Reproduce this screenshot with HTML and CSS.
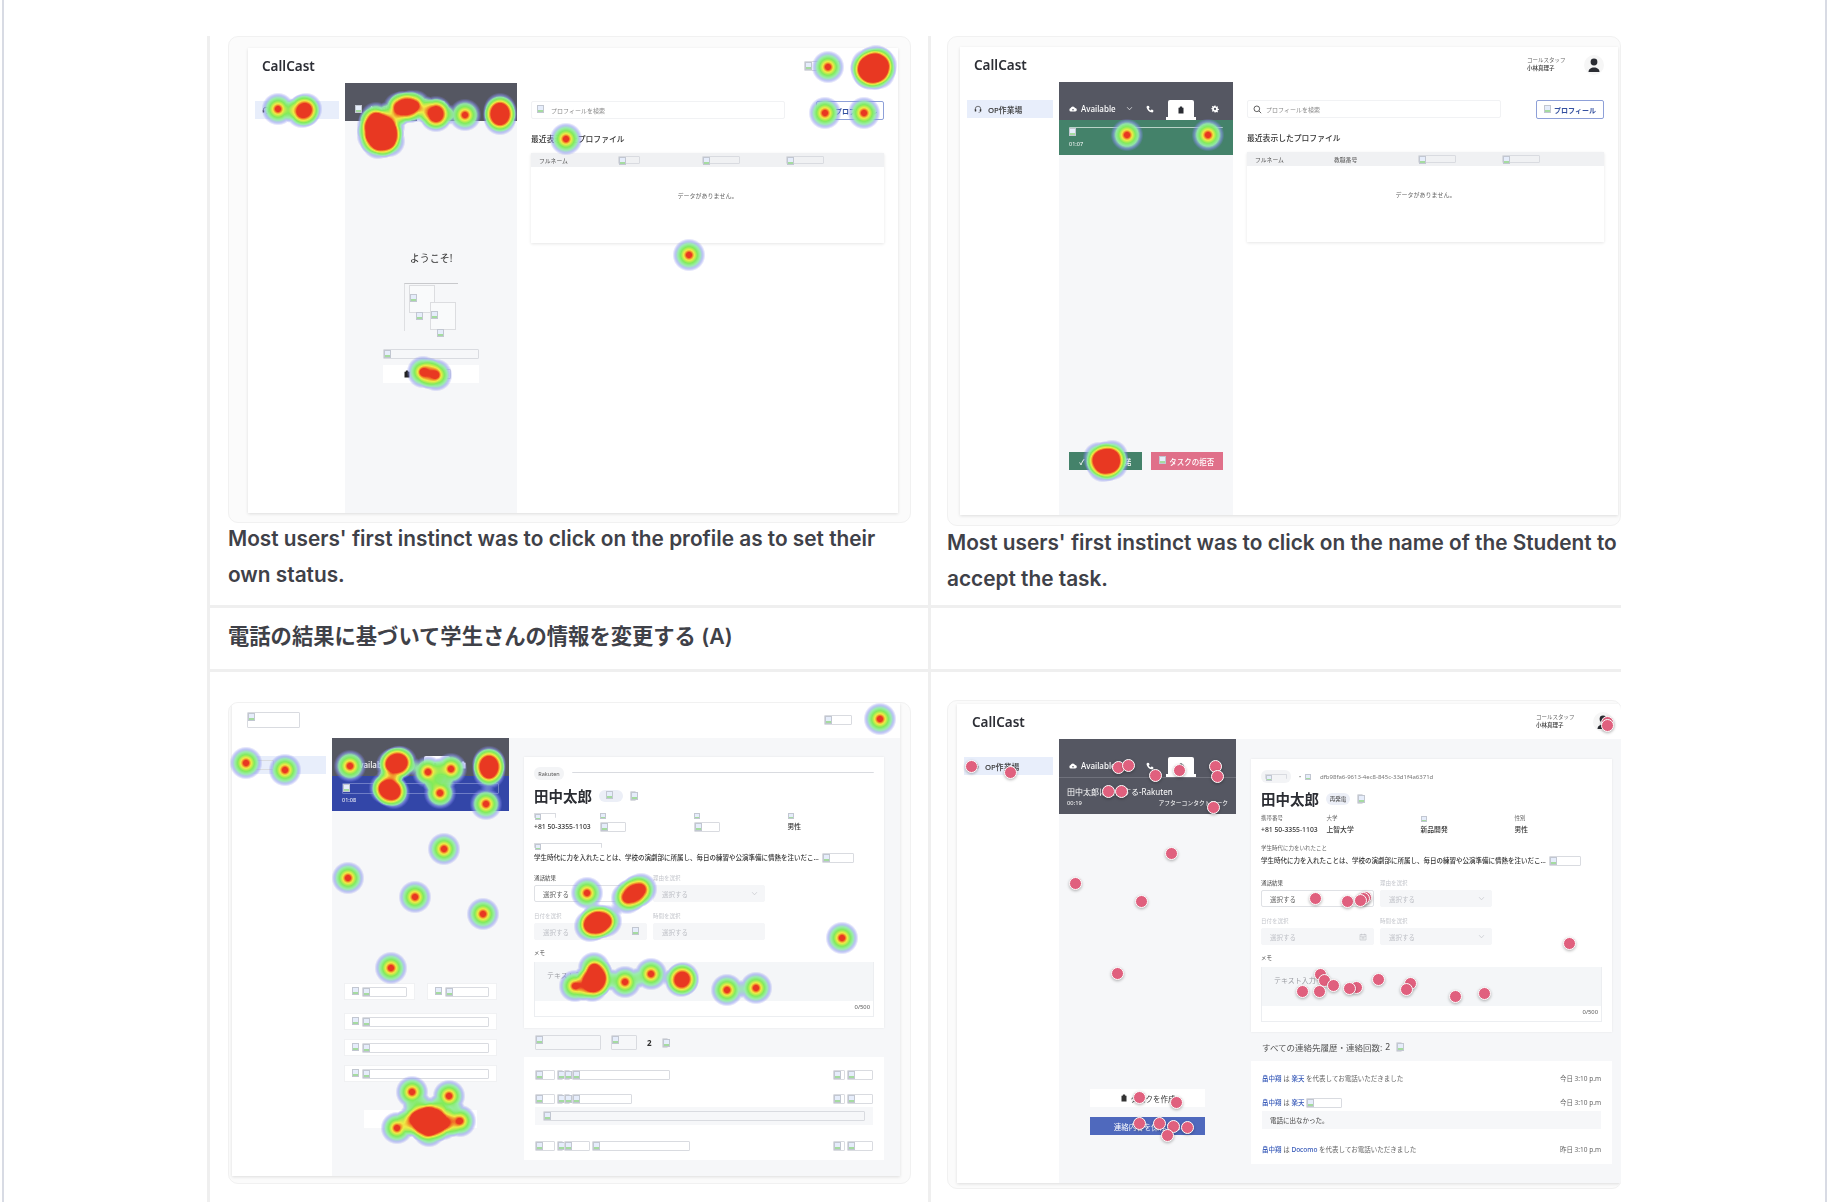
FILE: index.html
```html
<!DOCTYPE html>
<html lang="en">
<head>
    <meta charset="UTF-8">
    <meta name="viewport" content="width=device-width, initial-scale=1.0">
    <title>Usability test heatmaps</title>
    <link rel="stylesheet" href="styles.css">
</head>
<body>
    <svg class="icon-defs" aria-hidden="true">
        <symbol id="i-headset" viewBox="0 0 16 16"><path d="M2.5 10V8a5.5 5.5 0 0 1 11 0v2" fill="none" stroke="currentColor" stroke-width="1.3"/><rect x="1.5" y="8.5" width="3" height="4.5" rx="1" fill="currentColor"/><rect x="11.5" y="8.5" width="3" height="4.5" rx="1" fill="currentColor"/><path d="M13 13c0 1.2-2 1.8-4 1.8" fill="none" stroke="currentColor"/></symbol>
        <symbol id="i-search" viewBox="0 0 16 16"><circle cx="6.8" cy="6.8" r="5" fill="none" stroke="currentColor" stroke-width="1.5"/><path d="M10.5 10.5l4 4" stroke="currentColor" stroke-width="1.5"/></symbol>
        <symbol id="i-cloud" viewBox="0 0 16 16"><path d="M4 13a3.5 3.5 0 0 1-.6-6.9A4.5 4.5 0 0 1 12 6a3.5 3.5 0 0 1 .3 7z" fill="currentColor"/><circle cx="8" cy="9.5" r="1.6" fill="#555762"/></symbol>
        <symbol id="i-phone" viewBox="0 0 16 16"><path d="M3 1.5l3 .5 1 3.5-1.7 1.3c.8 2 2.2 3.400 4.200 4.200L10.800 8.800l3.500 1 .5 3-1.800 2C7 14.800 1.200 9 1 3.300z" fill="currentColor"/></symbol>
        <symbol id="i-clip" viewBox="0 0 16 16"><path d="M3 3.500h2.500V2a1 1 0 0 1 1-1h3a1 1 0 0 1 1 1v1.500H13V15H3z" fill="currentColor"/></symbol>
        <symbol id="i-gear" viewBox="0 0 16 16"><path d="M7 1h2l.4 2 1.700.7 1.700-1.100 1.400 1.400-1.100 1.700.7 1.700 2 .4v2l-2 .4-.7 1.700 1.100 1.700-1.400 1.400-1.700-1.100-1.700.7L9 15H7l-.4-2-1.700-.7-1.700 1.100-1.400-1.400 1.100-1.700-.7-1.700-2-.4V7l2-.4.7-1.700-1.100-1.700L3.200 1.800l1.700 1.100 1.700-.7z" fill="currentColor"/><circle cx="8" cy="8" r="2.300" fill="#555762"/></symbol>
        <symbol id="i-chevron" viewBox="0 0 16 16"><path d="M2.500 5l5.500 6 5.500-6" fill="none" stroke="currentColor" stroke-width="1.500"/></symbol>
        <symbol id="i-calendar" viewBox="0 0 16 16"><path d="M2 3h12v11H2z M2 6.500h12 M5 1.500v3 M11 1.500v3 M5 9h6 M5 11.500h6" fill="none" stroke="currentColor" stroke-width="1.300"/></symbol>
        <symbol id="i-user" viewBox="0 0 16 16"><circle cx="8" cy="5" r="3.400" fill="currentColor"/><path d="M2.500 15c0-3 2.500-4.500 5.500-4.500s5.500 1.500 5.500 4.500z" fill="currentColor"/></symbol>
    </svg>

    <div class="page">
        <div class="notes-table">

            <div class="notes-row row-shots">
                <div class="notes-cell cell-left">
                    <div class="shot shot-a" id="shot-a">
                        <div class="shot-inner">
                            <div class="shot-head">
                                <span class="logo">CallCast</span>
                                <div class="head-user head-user-blank">
                                    <span class="bi bi-w36"></span>
                                    <span class="avatar"><svg class="ico-fill"><use href="#i-user"/></svg></span>
                                </div>
                            </div>
                            <div class="shot-body">
                                <nav class="shot-nav"><div class="nav-item"><svg class="ico"><use href="#i-headset"/></svg><span>OP作業場</span></div></nav>
                                <aside class="panel">
                                    <div class="panel-top">
                                        <div class="tabs">
                                            <span class="bi bi-w10"></span>
                                            <span class="tabs-status">Available</span>
                                            <span class="tab"><svg class="ico"><use href="#i-clip"/></svg></span>
                                            <svg class="ico tabs-gear"><use href="#i-gear"/></svg>
                                        </div>
                                    </div>
                                    <div class="welcome">
                                        <div class="welcome-title">ようこそ!</div>
                                        <div class="illust">
                                            <div class="illust-sheet sheet-one"><span class="bi bi-w10"></span><span class="bi bi-w10 sheet-small"></span></div>
                                            <div class="illust-sheet sheet-two"><span class="bi bi-w10"></span><span class="bi bi-w10 sheet-small"></span></div>
                                        </div>
                                        <span class="bi welcome-bar"></span>
                                        <div class="welcome-btn"><svg class="ico"><use href="#i-clip"/></svg><span class="bi bi-w36"></span></div>
                                    </div>
                                </aside>
                                <main class="main-list">
                                    <div class="search-row">
                                        <div class="search-box"><span class="bi bi-w10"></span><span>プロフィールを検索</span></div>
                                        <div class="profile-btn"><span class="bi bi-w10"></span><span>プロフィール</span></div>
                                    </div>
                                    <div class="list-title">最近表示したプロファイル</div>
                                    <div class="list-table">
                                        <div class="list-head"><span>フルネーム</span><span><span class="bi bi-w22"></span></span><span><span class="bi bi-w38"></span></span><span><span class="bi bi-w38"></span></span></div>
                                        <div class="list-empty">データがありません。</div>
                                    </div>
                                </main>
                            </div>
                        </div>
                    </div>
                    <p class="caption caption-a">Most users' first instinct was to click on the profile as to set their own status.</p>
                </div>
                <div class="notes-cell cell-right">
                    <div class="shot shot-b" id="shot-b">
                        <div class="shot-inner">
                            <div class="shot-head">
                                <span class="logo">CallCast</span>
                                <div class="head-user">
                                    <div class="staff"><span>コールスタッフ</span><b>小林真理子</b></div>
                                    <span class="avatar"><svg class="ico-fill"><use href="#i-user"/></svg></span>
                                </div>
                            </div>
                            <div class="shot-body">
                                <nav class="shot-nav"><div class="nav-item"><svg class="ico"><use href="#i-headset"/></svg><span>OP作業場</span></div></nav>
                                <aside class="panel">
                                    <div class="panel-top">
                                        <div class="tabs">
                                            <svg class="ico"><use href="#i-cloud"/></svg>
                                            <span class="tabs-status">Available</span>
                                            <svg class="ico tabs-chevron"><use href="#i-chevron"/></svg>
                                            <svg class="ico"><use href="#i-phone"/></svg>
                                            <span class="tab"><svg class="ico"><use href="#i-clip"/></svg></span>
                                            <svg class="ico tabs-gear"><use href="#i-gear"/></svg>
                                        </div>
                                    </div>
                                    <div class="call-strip strip-green">
                                        <span class="bi bi-fill strip-bar"></span>
                                        <span class="strip-time">01:07</span>
                                    </div>
                                    <div class="task-actions">
                                        <div class="task-btn task-accept">✓ タスクを承諾</div>
                                        <div class="task-btn task-reject"><span class="bi bi-w8"></span>タスクの拒否</div>
                                    </div>
                                </aside>
                                <main class="main-list">
                                    <div class="search-row">
                                        <div class="search-box"><svg class="ico"><use href="#i-search"/></svg><span>プロフィールを検索</span></div>
                                        <div class="profile-btn"><span class="bi bi-w8"></span><span>プロフィール</span></div>
                                    </div>
                                    <div class="list-title">最近表示したプロファイル</div>
                                    <div class="list-table">
                                        <div class="list-head"><span>フルネーム</span><span>教職番号</span><span><span class="bi bi-w38"></span></span><span><span class="bi bi-w38"></span></span></div>
                                        <div class="list-empty">データがありません。</div>
                                    </div>
                                </main>
                            </div>
                        </div>
                    </div>
                    <p class="caption caption-b">Most users' first instinct was to click on the name of the Student to accept the task.</p>
                </div>
            </div>

            <div class="notes-row row-title">
                <div class="notes-cell cell-left"><h3 class="section-title">電話の結果に基づいて学生さんの情報を変更する (A)</h3></div>
                <div class="notes-cell cell-right"></div>
            </div>

            <div class="notes-row row-detail">
                <div class="notes-cell cell-left">
                    <div class="shot shot-c" id="shot-c">
                        <div class="shot-inner">
                            <div class="shot-head">
                                <span class="bi bi-w52"></span>
                                <div class="head-user head-user-blank">
                                    <span class="bi bi-w28"></span>
                                    <span class="bi bi-w10"></span>
                                </div>
                            </div>
                            <div class="shot-body">
                                <nav class="shot-nav"><div class="nav-item"><span class="bi bi-w28"></span></div></nav>
                                <aside class="panel">
                                    <div class="panel-top">
                                        <div class="tabs">
                                            <svg class="ico"><use href="#i-cloud"/></svg>
                                            <span class="tabs-status">Available</span>
                                            <svg class="ico tabs-chevron"><use href="#i-chevron"/></svg>
                                            <span class="tab"><svg class="ico"><use href="#i-phone"/></svg></span>
                                            <svg class="ico"><use href="#i-clip"/></svg>
                                            <svg class="ico tabs-gear"><use href="#i-gear"/></svg>
                                        </div>
                                    </div>
                                    <div class="call-strip strip-blue">
                                        <span class="bi bi-fill strip-bar"></span>
                                        <span class="strip-time">01:08</span>
                                    </div>
                                    <div class="script-list">
                                        <div class="script-pair">
                                            <div class="script-item"><span class="bi bi-w8"></span><span class="bi bi-fill"></span></div>
                                            <div class="script-item"><span class="bi bi-w8"></span><span class="bi bi-fill"></span></div>
                                        </div>
                                        <div class="script-item"><span class="bi bi-w8"></span><span class="bi bi-fill"></span></div>
                                        <div class="script-item"><span class="bi bi-w8"></span><span class="bi bi-fill"></span></div>
                                        <div class="script-item"><span class="bi bi-w8"></span><span class="bi bi-fill"></span></div>
                                        <div class="script-action"></div>
                                    </div>
                                </aside>
                                <main class="main-detail">
                                    <section class="detail-card">
                                        <div class="crumb-row"><span class="crumb-chip">Rakuten</span><span class="bi bi-fill crumb-line"></span></div>
                                        <div class="name-row"><span class="name">田中太郎</span><span class="name-chip"><span class="bi bi-w10"></span></span><span class="bi bi-w6"></span></div>
                                        <div class="field-grid">
                                            <div class="field-label"><span class="bi bi-w22 bi-low"></span></div><div class="field-label"><span class="bi bi-w10 bi-low"></span></div><div class="field-label"><span class="bi bi-w10 bi-low"></span></div><div class="field-label"><span class="bi bi-w10 bi-low"></span></div>
                                            <div class="field-value">+81 50-3355-1103</div><div class="field-value"><span class="bi bi-w26"></span></div><div class="field-value"><span class="bi bi-w26"></span></div><div class="field-value">男性</div>
                                        </div>
                                        <div class="field-label label-gap"><span class="bi bi-w68 bi-low"></span></div>
                                        <div class="field-long">学生時代に力を入れたことは、学校の演劇部に所属し、毎日の練習や公演準備に情熱を注いだこ...<span class="bi bi-w32"></span></div>
                                        <div class="form-grid">
                                            <div><label class="form-label">通話結果</label><div class="select">選択する<svg class="ico tabs-chevron"><use href="#i-chevron"/></svg></div></div>
                                            <div><label class="form-label is-off">理由を選択</label><div class="select is-off">選択する<svg class="ico tabs-chevron"><use href="#i-chevron"/></svg></div></div>
                                            <div><label class="form-label is-off">日付を選択</label><div class="select is-off">選択する<span class="bi bi-w8"></span></div></div>
                                            <div><label class="form-label is-off">時間を選択</label><div class="select is-off">選択する</div></div>
                                        </div>
                                        <label class="form-label memo-label">メモ</label>
                                        <div class="memo"><div class="memo-fill">テキスト入力</div><div class="memo-count">0/500</div></div>
                                    </section>
                                    <div class="history-title"><span class="bi bi-w66"></span><span class="bi bi-w36"></span><b>2</b><span class="bi bi-w6"></span></div>
                                    <section class="history-card">
                                        <div class="history-row"><div><span class="bi bi-w20"></span> <span class="bi bi-w6"></span> <span class="bi bi-w6"></span> <span class="bi bi-w98"></span></div><div><span class="bi bi-w12"></span> <span class="bi bi-w26"></span></div></div>
                                        <div class="history-row"><div><span class="bi bi-w20"></span> <span class="bi bi-w6"></span> <span class="bi bi-w6"></span> <span class="bi bi-w60"></span></div><div><span class="bi bi-w12"></span> <span class="bi bi-w26"></span></div></div>
                                        <div class="history-note"><span class="bi bi-fill"></span></div>
                                        <div class="history-row row-last"><div><span class="bi bi-w20"></span> <span class="bi bi-w6"></span> <span class="bi bi-w26"></span> <span class="bi bi-w98"></span></div><div><span class="bi bi-w12"></span> <span class="bi bi-w26"></span></div></div>
                                    </section>
                                </main>
                            </div>
                        </div>
                    </div>
                </div>
                <div class="notes-cell cell-right">
                    <div class="shot shot-d" id="shot-d">
                        <div class="shot-inner">
                            <div class="shot-head">
                                <span class="logo">CallCast</span>
                                <div class="head-user">
                                    <div class="staff"><span>コールスタッフ</span><b>小林真理子</b></div>
                                    <span class="avatar"><svg class="ico-fill"><use href="#i-user"/></svg></span>
                                </div>
                            </div>
                            <div class="shot-body">
                                <nav class="shot-nav"><div class="nav-item"><svg class="ico"><use href="#i-headset"/></svg><span>OP作業場</span></div></nav>
                                <aside class="panel">
                                    <div class="panel-top panel-top-tall">
                                        <div class="tabs">
                                            <svg class="ico"><use href="#i-cloud"/></svg>
                                            <span class="tabs-status">Available</span>
                                            <svg class="ico tabs-chevron"><use href="#i-chevron"/></svg>
                                            <svg class="ico"><use href="#i-phone"/></svg>
                                            <span class="tab"><svg class="ico"><use href="#i-clip"/></svg></span>
                                            <svg class="ico tabs-gear"><use href="#i-gear"/></svg>
                                        </div>
                                        <div class="call-info">
                                            <div class="call-name">田中太郎に発信する-Rakuten</div>
                                            <div class="call-meta"><span>00:19</span><span>アフターコンタクトワーク</span></div>
                                        </div>
                                    </div>
                                    <div class="task-stack">
                                        <div class="stack-btn"><svg class="ico"><use href="#i-clip"/></svg>タスクを作成</div>
                                        <div class="stack-btn stack-primary">連絡内容を保存する</div>
                                    </div>
                                </aside>
                                <main class="main-detail">
                                    <section class="detail-card">
                                        <div class="crumb-row"><span class="crumb-chip"><span class="bi bi-w22 bi-low"></span></span><span class="crumb-sep">•</span><span class="bi bi-w10 bi-low"></span><span class="crumb-id">dfb98fa6-9613-4ec8-845c-33d1f4a6371d</span></div>
                                        <div class="name-row"><span class="name">田中太郎</span><span class="name-chip">再発電</span><span class="bi bi-w6"></span></div>
                                        <div class="field-grid">
                                            <div class="field-label">携帯番号</div><div class="field-label">大学</div><div class="field-label"><span class="bi bi-w10 bi-low"></span></div><div class="field-label">性別</div>
                                            <div class="field-value">+81 50-3355-1103</div><div class="field-value">上智大学</div><div class="field-value">新品開発</div><div class="field-value">男性</div>
                                        </div>
                                        <div class="field-label label-gap">学生時代に力をいれたこと</div>
                                        <div class="field-long">学生時代に力を入れたことは、学校の演劇部に所属し、毎日の練習や公演準備に情熱を注いだこ...<span class="bi bi-w32"></span></div>
                                        <div class="form-grid">
                                            <div><label class="form-label">通話結果</label><div class="select">選択する<svg class="ico tabs-chevron"><use href="#i-chevron"/></svg></div></div>
                                            <div><label class="form-label is-off">理由を選択</label><div class="select is-off">選択する<svg class="ico tabs-chevron"><use href="#i-chevron"/></svg></div></div>
                                            <div><label class="form-label is-off">日付を選択</label><div class="select is-off">選択する<svg class="ico"><use href="#i-calendar"/></svg></div></div>
                                            <div><label class="form-label is-off">時間を選択</label><div class="select is-off">選択する<svg class="ico tabs-chevron"><use href="#i-chevron"/></svg></div></div>
                                        </div>
                                        <label class="form-label memo-label">メモ</label>
                                        <div class="memo"><div class="memo-fill">テキスト入力</div><div class="memo-count">0/500</div></div>
                                    </section>
                                    <div class="history-title history-text">すべての連絡先履歴・連絡回数: <b>2</b><span class="bi bi-w6"></span></div>
                                    <section class="history-card">
                                        <div class="history-row"><div><a>畠中翔</a> は <a>楽天</a> を代表してお電話いただきました</div><div>今日 3:10 p.m</div></div>
                                        <div class="history-row"><div><a>畠中翔</a> は <a>楽天</a> <span class="bi bi-w36"></span></div><div>今日 3:10 p.m</div></div>
                                        <div class="history-note">電話に出なかった。</div>
                                        <div class="history-row row-last"><div><a>畠中翔</a> は <a>Docomo</a> を代表してお電話いただきました</div><div>昨日 3:10 p.m</div></div>
                                    </section>
                                </main>
                            </div>
                        </div>
                    </div>
                </div>
            </div>

        </div>
    </div>

    <script src="script.js"></script>
</body>
</html>
```

FILE: styles.css
```css
* {
    box-sizing: border-box;
}
html, body {
    margin: 0;
    height: 1202px;
    overflow: hidden;
    background: #ffffff;
    color: #3d3f46;
    font-family: "Noto Sans", "Noto Sans CJK JP", sans-serif;
}
.icon-defs {
    display: none;
}
.page {
    height: 1202px;
    width: 1825px;
    margin-left: 2px;
    padding: 36px 0 0 203px;
    border-left: 2px solid #d8dbe4;
    border-right: 2px solid #d8dbe4;
}
.notes-table {
    width: 1414px;
}
.notes-row {
    display: grid;
    grid-template-columns: 721px 1fr;
    border-left: 3px solid #efefef;
    border-bottom: 3px solid #efefef;
}
.row-shots {
    height: 572px;
}
.row-title {
    height: 64px;
}
.row-detail {
    height: 560px;
    border-bottom: none;
}
.notes-cell {
    overflow: hidden;
    min-width: 0;
}
.cell-left {
    border-right: 3px solid #efefef;
    padding-left: 18px;
}
.cell-right {
    padding-left: 16px;
}
.caption {
    margin: 0;
    font-family: Inter, "Noto Sans CJK JP", sans-serif;
    font-size: 20.8px;
    font-weight: 600;
    line-height: 36px;
    color: #3f4148;
}
.caption-a {
    margin-top: -2px;
    width: 680px;
}
.caption-b {
    margin-top: -1px;
    width: 672px;
}
.section-title {
    margin: 10px 0 0;
    font-family: Inter, "Noto Sans CJK JP", sans-serif;
    font-size: 21.3px;
    font-weight: 600;
    line-height: 36px;
    color: #3f4148;
}
.row-detail .shot-c {
    margin-top: 30px;
}
.row-detail .shot-d {
    margin-top: 28px;
}

/* screenshot frame */
.shot {
    position: relative;
    overflow: hidden;
    background: #fbfbfb;
    border: 1px solid #f1f1f1;
    border-radius: 10px;
}
.shot-inner {
    display: flex;
    flex-direction: column;
    height: 100%;
    background: #ffffff;
    box-shadow: 0 1px 3px rgba(0,0,0,0.12);
    filter: blur(0.4px);
}
.shot-a {
    width: 683px;
    height: 487px;
    padding: 11px 12px 9px 19px;
}
.shot-b {
    width: 674px;
    height: 490px;
    padding: 10px 2px 10px 12px;
}
.shot-c {
    width: 683px;
    height: 482px;
    padding: 0 10px 7px 3px;
}
.shot-d {
    width: 675px;
    height: 489px;
    padding: 3px 0 5px 9px;
}
.shot-head {
    flex: 0 0 35px;
    display: flex;
    align-items: center;
    justify-content: space-between;
    padding: 0 14px 0 14px;
}
.shot-c .shot-head {
    padding: 0 14px 2px 15px;
}
.shot-d .shot-head {
    padding: 0 8px 0 15px;
}
.logo {
    font-size: 13.5px;
    font-weight: 600;
    color: #2d2f36;
}
.head-user {
    display: flex;
    align-items: center;
    gap: 18px;
}
.head-user-blank {
    gap: 24px;
}
.staff {
    display: flex;
    flex-direction: column;
    font-size: 5.500px;
    line-height: 7.500px;
    width: 39px;
    color: #666;
    white-space: nowrap;
}
.staff b {
    color: #333;
    font-weight: 500;
}
.avatar {
    width: 20px;
    height: 20px;
    border-radius: 50%;
    background: #f6f6f6;
    color: #2b2d33;
    display: flex;
}
.ico-fill {
    width: 20px;
    height: 20px;
    padding: 2px;
}
.shot-body {
    flex: 1;
    display: grid;
    min-height: 0;
}
.shot-a .shot-body {
    grid-template-columns: 97px 172px 1fr;
}
.shot-b .shot-body {
    grid-template-columns: 99px 174px 1fr;
}
.shot-c .shot-body {
    grid-template-columns: 100px 177px 1fr;
}
.shot-d .shot-body {
    grid-template-columns: 102px 177px 1fr;
}
.ico {
    width: 8px;
    height: 8px;
    flex: none;
}

/* broken image placeholder */
.bi {
    display: inline-block;
    position: relative;
    height: 10px;
    vertical-align: middle;
    border: 1px solid #d9dbe0;
    border-radius: 1px;
}
.bi::before {
    content: "";
    position: absolute;
    left: 0;
    top: 0;
    width: 5px;
    height: 6px;
    background: linear-gradient(#e6edfb 0 65%, #a5dba0 65%);
    border: 1px solid #c2c7d1;
}
.bi-low {
    height: 5px;
    border-bottom: none;
}
.bi-low::before {
    width: 4px;
    height: 4px;
}
.bi-w6 { width: 6px; }
.bi-w8 { width: 8px; border: none; }
.bi-w10 { width: 10px; border: none; }
.bi-w12 { width: 12px; }
.bi-w20 { width: 20px; }
.bi-w22 { width: 22px; }
.bi-w26 { width: 26px; }
.bi-w28 { width: 28px; }
.bi-w32 { width: 32px; margin-left: 3px; }
.bi-w36 { width: 36px; }
.bi-w38 { width: 38px; }
.bi-w52 { width: 53px; height: 16px; }
.bi-w60 { width: 60px; }
.bi-w66 { width: 66px; height: 15px; }
.bi-w68 { width: 68px; }
.bi-w98 { width: 98px; }
.bi-fill { display: block; flex: 1; min-width: 0; }

/* left nav */
.shot-nav {
    padding: 18px 6px 0 7px;
}
.nav-item {
    display: flex;
    align-items: center;
    gap: 6px;
    height: 18px;
    padding-left: 7px;
    font-size: 7.800px;
    font-weight: 500;
    background: #e8eefb;
    color: #333;
}

/* middle panel */
.panel {
    display: flex;
    flex-direction: column;
    background: #f6f7f9;
    min-height: 0;
}
.panel-top {
    height: 38px;
    background: #555762;
    padding-top: 18px;
    color: #ffffff;
    flex: none;
}
.panel-top-tall {
    height: 75px;
}
.tabs {
    display: flex;
    align-items: center;
    height: 20px;
    padding: 0 8px 0 10px;
    gap: 9px;
    font-size: 8px;
    font-weight: 500;
}
.tabs > :not(.tab) {
    margin-bottom: 3px;
}
.tabs-status {
    margin-left: -5px;
    width: 36px;
    white-space: nowrap;
}
.tabs-chevron {
    width: 7px;
    height: 7px;
}
.tabs .tabs-chevron {
    margin-right: 4px;
}
.tabs-gear {
    margin-left: auto;
    margin-right: 6px;
}
.tab {
    position: relative;
    width: 26px;
    height: 20px;
    margin-left: 5px;
    background: #ffffff;
    border-radius: 2px 2px 0 0;
    color: #2b2d33;
    display: flex;
    align-items: center;
    justify-content: center;
}
.tab::after {
    content: "";
    position: absolute;
    left: -2px;
    right: -2px;
    bottom: 0;
    height: 3px;
    background: #ffffff;
}
.call-strip {
    flex: none;
    height: 35px;
    padding: 7px 10px 0;
    color: #ffffff;
    font-size: 5.500px;
}
.strip-green {
    background: #44826a;
}
.strip-blue {
    background: #3346a8;
}
.strip-bar {
    height: 11px;
    border: none;
    border-top: 1px solid #b9d2c7;
}
.strip-blue .strip-bar {
    border: 1px solid #6e7dc6;
}
.strip-time {
    display: block;
    margin-top: 2px;
}
.welcome {
    display: flex;
    flex-direction: column;
    align-items: center;
    padding-top: 130px;
}
.welcome-title {
    font-size: 10px;
    line-height: 14px;
    color: #333;
}
.illust {
    position: relative;
    width: 54px;
    height: 48px;
    margin-top: 18px;
    border-top: 1px solid #c8c9cc;
    border-left: 1px solid #dedfe2;
}
.illust-sheet {
    position: absolute;
    width: 26px;
    height: 28px;
    background: #f9fafb;
    border: 1px solid #dcdde0;
}
.sheet-one {
    left: 4px;
    top: 1px;
}
.sheet-two {
    left: 25px;
    top: 18px;
}
.sheet-small {
    display: block;
    margin: 4px 0 0 6px;
    height: 5px;
}
.welcome-bar {
    width: 96px;
    height: 10px;
    margin-top: 18px;
}
.welcome-btn {
    display: flex;
    align-items: center;
    gap: 4px;
    width: 96px;
    height: 18px;
    margin-top: 6px;
    padding-left: 20px;
    background: #ffffff;
    color: #222;
}
.task-actions {
    margin-top: auto;
    padding: 0 10px 45px;
    display: grid;
    grid-template-columns: 1fr 1fr;
    gap: 9px;
}
.task-btn {
    height: 18px;
    display: flex;
    align-items: center;
    justify-content: center;
    gap: 2px;
    color: #ffffff;
    font-size: 7.500px;
    font-weight: 500;
    white-space: nowrap;
}
.task-accept {
    background: #44826a;
}
.task-reject {
    background: #e0708a;
}
.call-info {
    height: 36px;
    padding: 8px 8px 0;
    border-top: 1px solid #70727c;
}
.call-name {
    font-size: 8px;
    line-height: 11px;
}
.call-meta {
    display: flex;
    justify-content: space-between;
    margin-top: 2px;
    font-size: 5.800px;
    line-height: 9px;
}
.task-stack {
    margin-top: auto;
    padding: 0 31px 48px;
    display: flex;
    flex-direction: column;
    gap: 10px;
}
.stack-btn {
    height: 18px;
    display: flex;
    align-items: center;
    justify-content: center;
    gap: 3px;
    background: #ffffff;
    font-size: 7.500px;
    color: #333;
}
.stack-primary {
    background: #4f69bd;
    color: #ffffff;
}
.script-list {
    padding: 172px 12px 0;
    display: flex;
    flex-direction: column;
    gap: 9px;
}
.script-pair {
    display: grid;
    grid-template-columns: 1fr 1fr;
    gap: 12px;
    margin-bottom: 4px;
}
.script-item {
    display: flex;
    align-items: center;
    gap: 2px;
    height: 17px;
    padding: 0 7px;
    background: #ffffff;
    border: 1px solid #f0f1f3;
}
.script-action {
    margin: 19px 20px 0;
    height: 18px;
    background: #ffffff;
}

/* list screen */
.main-list {
    padding: 18px 14px 0;
}
.search-row {
    display: flex;
    justify-content: space-between;
}
.search-box {
    width: 254px;
    height: 18px;
    display: flex;
    align-items: center;
    gap: 4px;
    padding-left: 5px;
    font-size: 6px;
    color: #888;
    border: 1px solid #f1f2f4;
    border-radius: 2px;
}
.search-box .ico {
    color: #444;
    width: 9px;
    height: 9px;
}
.profile-btn {
    width: 68px;
    height: 19px;
    display: flex;
    align-items: center;
    justify-content: center;
    gap: 2px;
    font-size: 7px;
    font-weight: 700;
    color: #34509f;
    border: 1px solid #8ea0d8;
    border-radius: 2px;
}
.list-title {
    margin-top: 12px;
    font-size: 7.800px;
    line-height: 14px;
    font-weight: 500;
    color: #333;
}
.list-table {
    margin-top: 7px;
    height: 90px;
    box-shadow: 0 1px 3px rgba(0,0,0,0.1);
}
.list-head {
    display: grid;
    grid-template-columns: 79px 84px 84px 1fr;
    align-items: center;
    height: 14px;
    padding-left: 8px;
    background: #f0f1f3;
    font-size: 5.800px;
    color: #555;
}
.list-head .bi {
    height: 8px;
}
.list-empty {
    padding-top: 24px;
    text-align: center;
    font-size: 6px;
    line-height: 10px;
    color: #666;
}

/* detail screen */
.main-detail {
    padding: 19px 16px 0 15px;
    background: #f6f7f9;
    min-width: 0;
}
.shot-d .main-detail {
    padding: 20px 9px 0 15px;
}
.detail-card {
    padding: 11px 10px 11px;
    background: #ffffff;
    box-shadow: 0 0 2px rgba(0,0,0,0.08);
}
.shot-c .detail-card {
    padding-top: 10px;
}
.shot-d .detail-card {
    padding-bottom: 10px;
}
.crumb-row {
    display: flex;
    align-items: center;
    gap: 4px;
    height: 13px;
    font-size: 5.500px;
    color: #777;
}
.crumb-chip {
    display: inline-flex;
    align-items: center;
    justify-content: center;
    width: 30px;
    height: 13px;
    margin-right: 4px;
    border-radius: 6px;
    background: #f3f4f6;
    color: #555;
}
.crumb-line {
    height: 3px;
    border-left: none;
    border-right: none;
    border-bottom: none;
}
.crumb-line::before {
    display: none;
}
.crumb-id {
    margin-left: 1px;
    font-size: 6px;
}
.name-row {
    display: flex;
    align-items: center;
    gap: 7px;
    height: 16px;
    margin-top: 8px;
}
.name {
    font-size: 14.500px;
    font-weight: 700;
    color: #2b2d33;
    line-height: 16px;
}
.name-chip {
    display: inline-flex;
    align-items: center;
    justify-content: center;
    width: 24px;
    height: 12px;
    border-radius: 6px;
    background: #eceff7;
    font-size: 5.500px;
    color: #444;
}
.field-grid {
    display: grid;
    grid-template-columns: 65.500px 94px 94px 1fr;
    margin-top: 7px;
}
.field-label {
    font-size: 5.500px;
    line-height: 8px;
    color: #666;
}
.field-grid .field-value {
    margin-top: 3px;
}
.field-value {
    font-size: 6.800px;
    line-height: 10px;
    color: #333;
    font-weight: 500;
}
.field-value .bi {
    height: 10px;
}
.label-gap {
    margin-top: 9px;
}
.field-long {
    margin-top: 4px;
    font-size: 6.500px;
    line-height: 10px;
    color: #333;
    font-weight: 500;
    white-space: nowrap;
}
.form-grid {
    display: grid;
    grid-template-columns: 113px 112px;
    gap: 10px 6px;
    margin-top: 13px;
}
.shot-c .form-grid {
    margin-top: 11px;
}
.form-label {
    display: block;
    font-size: 5.500px;
    line-height: 8px;
    color: #444;
}
.form-label.is-off {
    color: #c4c6cc;
}
.select {
    display: flex;
    align-items: center;
    justify-content: space-between;
    height: 17px;
    margin-top: 3px;
    padding: 0 6px 0 8px;
    font-size: 6.500px;
    color: #666;
    background: #ffffff;
    border: 1px solid #dfe1e5;
    border-radius: 2px;
}
.select.is-off {
    background: #f5f6f8;
    border-color: #f5f6f8;
    color: #c0c2c8;
}
.memo-label {
    margin-top: 9px;
}
.memo {
    height: 55px;
    margin-top: 5px;
    border: 1px solid #eceef1;
    border-top: none;
}
.memo-fill {
    height: 39px;
    padding: 9px 12px;
    background: #f4f6f8;
    font-size: 7px;
    line-height: 10px;
    color: #9a9ca2;
}
.memo-count {
    padding: 2px 3px 0 0;
    text-align: right;
    font-size: 5.800px;
    color: #555;
}
.history-title {
    display: flex;
    align-items: center;
    gap: 10px;
    height: 29px;
    padding-left: 11px;
    font-size: 8px;
    color: #333;
}
.history-title .bi-w36 {
    width: 26px;
    height: 15px;
}
.history-text {
    gap: 0;
    color: #555;
    font-size: 8.500px;
}
.history-text b {
    margin: 0 6px 0 3px;
    font-weight: 500;
}
.history-card {
    padding: 12px 11px 10px;
    background: #ffffff;
}
.history-row {
    display: flex;
    justify-content: space-between;
    align-items: center;
    height: 10px;
    font-size: 6.500px;
    color: #666;
    white-space: nowrap;
}
.history-row + .history-row {
    margin-top: 14px;
}
.history-row a {
    color: #3558b8;
    font-weight: 500;
}
.history-note {
    display: flex;
    align-items: center;
    height: 18px;
    margin-top: 4px;
    padding: 0 8px;
    background: #f6f7f9;
    font-size: 6.500px;
    color: #444;
}
.row-last {
    margin-top: 15px;
}

/* overlay drawn by script.js */
.heat-layer {
    position: absolute;
    left: 0;
    top: 0;
    pointer-events: none;
}
.pin {
    position: absolute;
    width: 13px;
    height: 13px;
    border-radius: 50%;
    background: #e0607e;
    border: 1.500px solid #ffffff;
    box-shadow: 0 1px 3px rgba(0,0,0,0.3);
}
```

FILE: script.js
```js
// Click data in page coordinates
const heatPoints = {
    'shot-a': [
        [277,108],[301,111],[305,108],[375,117],[379,127],[382,137],[377,142],[384,132],[372,125],[388,125],[372,135],[388,140],
        [405,106],[414,105],[398,107],[435,111],[435,115],[464,114],[499,113],[499,108],[499,118],
        [827,66],[873,67],[875,60],[870,73],[866,64],[880,64],[866,70],[878,72],[824,112],[863,112],[565,138],[688,254],[422,371],[435,374]
    ],
    'shot-b': [
        [1126,134],[1207,134],[1098,457],[1111,455],[1102,465],[1111,463],[1105,460]
    ],
    'shot-c': [
        [245,762],[284,769],[349,765],[396,762],[391,764],[400,761],[389,788],[384,787],[393,792],
        [427,771],[450,768],[488,765],[488,772],[488,761],[439,792],[485,803],[443,848],[347,877],
        [414,896],[482,913],[390,967],[586,892],[633,892],[626,897],[640,888],
        [596,922],[589,925],[605,920],[596,920],[841,937],[574,985],[593,967],[593,980],[591,985],[598,977],
        [624,981],[650,973],[680,980],[682,977],[726,989],[755,987],[879,718],
        [411,1091],[448,1095],[396,1127],[459,1120],[428,1120],[414,1117],[442,1123],[428,1130],[428,1112],[420,1122],[436,1118]
    ]
};
const pinPoints = [
    [970,765],[1009,771],[1107,790],[1120,790],[1117,766],[1127,764],[1154,774],[1178,769],[1214,765],[1216,775],
    [1212,806],[1170,852],[1074,882],[1140,900],[1116,972],[1314,897],[1346,900],[1364,896],[1362,897],[1359,899],
    [1568,942],[1319,973],[1323,979],[1301,990],[1318,990],[1332,984],[1355,986],[1348,987],[1377,978],[1409,982],
    [1405,988],[1454,995],[1483,992],[1138,1096],[1175,1101],[1138,1122],[1158,1122],[1172,1125],[1186,1126],[1166,1134],
    [1606,721],[1606,724]
];

// Colour stops for the heat ramp: [intensity, r, g, b, a]
const ramp = [
    [0.08, 120,130,235,0],
    [0.22, 140,150,240,0.55],
    [0.36, 150,235,170,0.95],
    [0.52, 130,235,90,1],
    [0.68, 240,235,70,1],
    [0.77, 240,130,40,1],
    [0.82, 232,56,34,1],
    [1, 232,56,34,1]
];

function rampColor(t) {
    if (t <= ramp[0][0]) return [0, 0, 0, 0];
    for (let i = 1; i < ramp.length; i++) {
        if (t <= ramp[i][0]) {
            const a = ramp[i - 1];
            const b = ramp[i];
            const k = (t - a[0]) / (b[0] - a[0]);
            return [1, 2, 3, 4].map(n => a[n] + (b[n] - a[n]) * k);
        }
    }
    return ramp[ramp.length - 1].slice(1);
}

function drawHeat(shot, points) {
    const box = shot.getBoundingClientRect();
    const canvas = document.createElement('canvas');
    canvas.className = 'heat-layer';
    canvas.width = box.width;
    canvas.height = box.height;
    const ctx = canvas.getContext('2d');
    const radius = 18;

    // Stack soft spots, then colour by the resulting alpha
    points.forEach(p => {
        const x = p[0] - box.left;
        const y = p[1] - box.top;
        const spot = ctx.createRadialGradient(x, y, 0, x, y, radius);
        spot.addColorStop(0, 'rgba(0,0,0,0.96)');
        spot.addColorStop(1, 'rgba(0,0,0,0)');
        ctx.fillStyle = spot;
        ctx.fillRect(x - radius, y - radius, radius * 2, radius * 2);
    });

    const image = ctx.getImageData(0, 0, canvas.width, canvas.height);
    for (let i = 0; i < image.data.length; i += 4) {
        const c = rampColor(image.data[i + 3] / 255);
        image.data[i] = c[0];
        image.data[i + 1] = c[1];
        image.data[i + 2] = c[2];
        image.data[i + 3] = c[3] * 255;
    }
    ctx.putImageData(image, 0, 0);
    shot.appendChild(canvas);
}

function drawPins(shot, points) {
    const box = shot.getBoundingClientRect();
    points.forEach(p => {
        const pin = document.createElement('div');
        pin.className = 'pin';
        pin.style.left = (p[0] - box.left - 6.5) + 'px';
        pin.style.top = (p[1] - box.top - 6.5) + 'px';
        shot.appendChild(pin);
    });
}

Object.keys(heatPoints).forEach(id => drawHeat(document.getElementById(id), heatPoints[id]));
drawPins(document.getElementById('shot-d'), pinPoints);
```
